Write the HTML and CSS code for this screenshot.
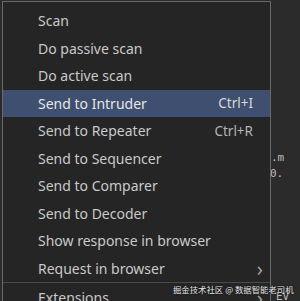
FILE: index.html
```html
<!DOCTYPE html>
<html lang="en">
<head>
  <meta charset="UTF-8">
  <title>Context menu</title>
  <link rel="stylesheet" href="styles.css">
</head>
<body>
  <div class="backdrop">
    <span class="behind behind-m">.m</span>
    <span class="behind behind-0">0.</span>
    <span class="behind behind-ev">EV</span>
  </div>

  <div class="menu">
    <div class="item">Scan</div>
    <div class="item">Do passive scan</div>
    <div class="item">Do active scan</div>
    <div class="item active">Send to Intruder <span class="shortcut">Ctrl+I</span></div>
    <div class="item">Send to Repeater <span class="shortcut">Ctrl+R</span></div>
    <div class="item">Send to Sequencer</div>
    <div class="item">Send to Comparer</div>
    <div class="item">Send to Decoder</div>
    <div class="item">Show response in browser</div>
    <div class="item">Request in browser <span class="arrow">&#x203A;</span></div>
    <div class="separator"></div>
    <div class="item">Extensions <span class="arrow">&#x203A;</span></div>
  </div>

  <div class="watermark">掘金技术社区 @ 数据智能老司机</div>
</body>
</html>
```

FILE: styles.css
```css
* {
  margin: 0;
  padding: 0;
  box-sizing: border-box;
}

body {
  background: #2b2b2b;
  font-family: 'Noto Sans', sans-serif;
  width: 300px;
  height: 301px;
  overflow: hidden;
  position: relative;
}

.behind {
  position: absolute;
  color: #bdbdbd;
  font-family: 'DejaVu Sans Mono', monospace;
  font-size: 11px;
}

.behind-m { left: 271px; top: 151px; }
.behind-0 { left: 270px; top: 167px; }
.behind-ev { left: 276px; top: 290px; }

.menu {
  position: absolute;
  left: 2px;
  top: 1px;
  width: 269px;
  height: 320px;
  background: #252526;
  border: 1px solid #6a6a6a;
  padding-top: 5px;
  color: #c9c9c9;
  font-size: 14px;
}

.item {
  display: flex;
  align-items: center;
  height: 27.5px;
  padding: 0 17px 0 35px;
}

.item.active {
  background: #3e4f70;
  color: #e6e6e6;
}

.shortcut {
  margin-left: auto;
  font-size: 13.5px;
  color: #b4b4b4;
}

.item.active .shortcut {
  color: #d8d8d8;
}

.arrow {
  margin-left: auto;
  margin-right: -10px;
  font-size: 20px;
  color: #a0a0a0;
}

.separator {
  height: 1px;
  background: #4a4a4a;
  margin: 0 0 1px;
}

.watermark {
  position: absolute;
  left: 173px;
  top: 283px;
  white-space: nowrap;
  font-family: 'Noto Sans CJK SC', sans-serif;
  font-size: 8.4px;
  color: #e8e8e8;
  text-shadow: 0 0 2px #000;
}
```
